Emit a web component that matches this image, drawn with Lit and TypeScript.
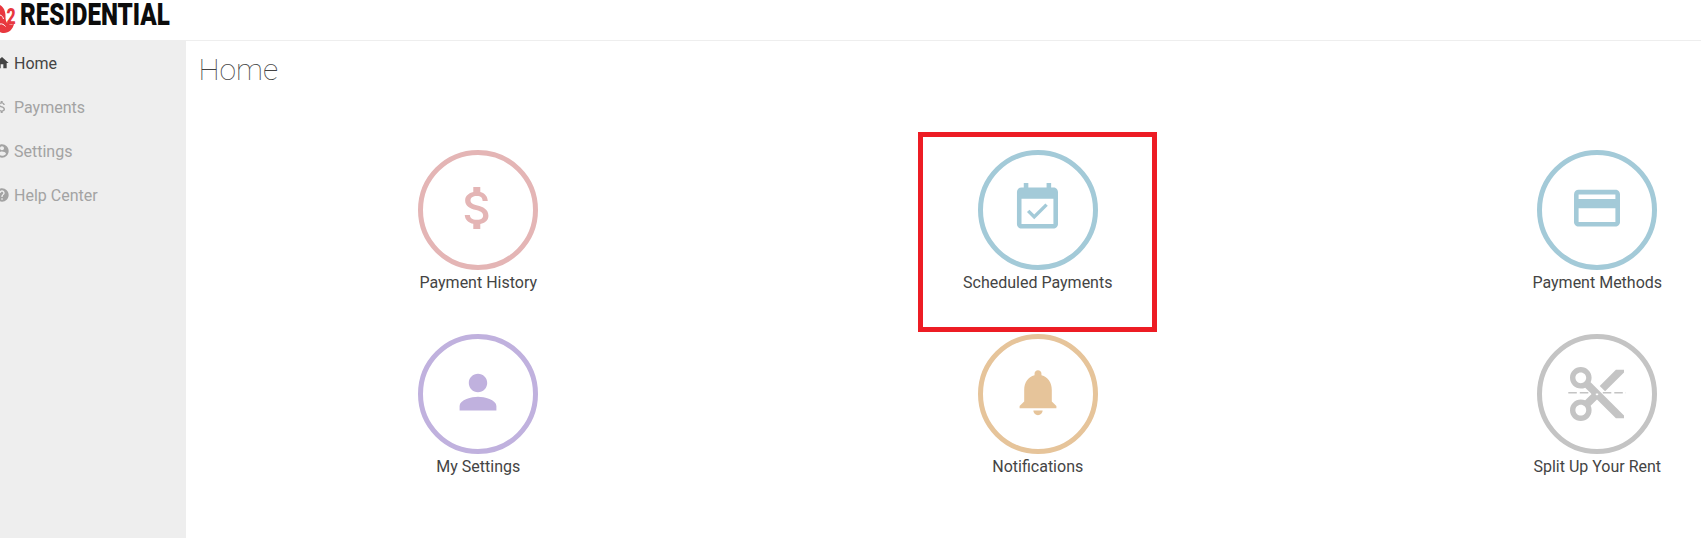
import { LitElement, html, css, svg } from "lit";
import { customElement } from "lit/decorators.js";

const ICONS: Record<string, ReturnType<typeof svg>> = {
  dollar: svg`<path transform="translate(27,25) scale(2.33)" d="M11.8 10.9c-2.27-.59-3-1.2-3-2.15 0-1.09 1.01-1.85 2.7-1.85 1.78 0 2.44.85 2.5 2.1h2.21c-.07-1.72-1.12-3.3-3.21-3.81V3h-3v2.16c-1.94.42-3.5 1.68-3.5 3.61 0 2.31 1.91 3.46 4.7 4.13 2.5.6 3 1.48 3 2.41 0 .69-.49 1.79-2.7 1.79-2.06 0-2.87-.92-2.98-2.1h-2.2c.12 2.19 1.76 3.42 3.68 3.83V21h3v-2.15c1.95-.37 3.5-1.5 3.5-3.55 0-2.84-2.43-3.81-4.7-4.4z"/>`,
  calendar: svg`<path transform="translate(27.1,25.6) scale(2.28)" d="M16.53 11.06L15.47 10l-4.88 4.88-2.12-2.12-1.06 1.06L10.59 17l5.94-5.94zM19 3h-1V1h-2v2H8V1H6v2H5c-1.11 0-1.99.9-1.99 2L3 19c0 1.1.89 2 2 2h14c1.1 0 2-.9 2-2V5c0-1.1-.9-2-2-2zm0 16H5V8h14v11z"/>`,
  card: svg`<path transform="translate(27.4,25.6) scale(2.3)" d="M20 4H4c-1.11 0-1.99.89-1.99 2L2 18c0 1.11.89 2 2 2h16c1.11 0 2-.89 2-2V6c0-1.11-.89-2-2-2zm0 14H4v-6h16v6zm0-10H4V6h16v2z"/>`,
  person: svg`<path transform="translate(27.4,25.6) scale(2.3)" d="M12 12c2.21 0 4-1.79 4-4s-1.79-4-4-4-4 1.79-4 4 1.79 4 4 4zm0 2c-2.67 0-8 1.34-8 4v2h16v-2c0-2.66-5.33-4-8-4z"/>`,
  bell: svg`<path transform="translate(27.4,25.6) scale(2.3)" d="M12 22c1.1 0 2-.9 2-2h-4c0 1.1.89 2 2 2zm6-6v-5c0-3.07-1.64-5.64-4.5-6.32V4c0-.83-.67-1.5-1.5-1.5s-1.5.67-1.5 1.5v.68C7.63 5.36 6 7.92 6 11v5l-2 2v1h16v-1l-2-2z"/>`,
  cut: svg`<path transform="translate(22.6,22.6) scale(2.7)" d="M9.64 7.64c.23-.5.36-1.05.36-1.64 0-2.21-1.79-4-4-4S2 3.79 2 6s1.79 4 4 4c.59 0 1.14-.13 1.64-.36L10 12l-2.36 2.36C7.14 14.13 6.59 14 6 14c-2.21 0-4 1.79-4 4s1.79 4 4 4 4-1.79 4-4c0-.59-.13-1.14-.36-1.64L12 14l7 7h3v-1L9.64 7.64zM6 8c-1.1 0-2-.89-2-2s.9-2 2-2 2 .89 2 2-.9 2-2 2zm0 12c-1.1 0-2-.89-2-2s.9-2 2-2 2 .89 2 2-.9 2-2 2zm6-7.5c-.28 0-.5-.22-.5-.5s.22-.5.5-.5.5.22.5.5-.22.5-.5.5zM19 3l-6 6 2 2 7-7V3z"/>
    <line x1="26.3" y1="53.8" x2="84" y2="53.8" stroke="currentColor" stroke-width="1.4" stroke-dasharray="8.5 3"/>`,
};

const NAV_ICONS: Record<string, ReturnType<typeof svg>> = {
  home: svg`<path d="M10 20v-6h4v6h5v-8h3L12 3 2 12h3v8z"/>`,
  dollar: svg`<path d="M11.8 10.9c-2.27-.59-3-1.2-3-2.15 0-1.09 1.01-1.85 2.7-1.85 1.78 0 2.44.85 2.5 2.1h2.21c-.07-1.72-1.12-3.3-3.21-3.81V3h-3v2.16c-1.94.42-3.5 1.68-3.5 3.61 0 2.31 1.91 3.46 4.7 4.13 2.5.6 3 1.48 3 2.41 0 .69-.49 1.79-2.7 1.79-2.06 0-2.87-.92-2.98-2.1h-2.2c.12 2.19 1.76 3.42 3.68 3.83V21h3v-2.15c1.95-.37 3.5-1.5 3.5-3.55 0-2.84-2.43-3.81-4.7-4.4z"/>`,
  account: svg`<path d="M12 2C6.48 2 2 6.48 2 12s4.48 10 10 10 10-4.48 10-10S17.52 2 12 2zm0 3c1.66 0 3 1.34 3 3s-1.34 3-3 3-3-1.34-3-3 1.34-3 3-3zm0 14.2c-2.5 0-4.71-1.28-6-3.22.03-1.99 4-3.08 6-3.08 1.99 0 5.97 1.09 6 3.08-1.29 1.94-3.5 3.22-6 3.22z"/>`,
  help: svg`<path d="M12 2C6.48 2 2 6.48 2 12s4.48 10 10 10 10-4.48 10-10S17.52 2 12 2zm1 17h-2v-2h2v2zm2.07-7.75l-.9.92C13.45 12.9 13 13.5 13 15h-2v-.5c0-1.1.45-2.1 1.17-2.83l1.24-1.26c.37-.36.59-.86.59-1.41 0-1.1-.9-2-2-2s-2 .9-2 2H8c0-2.21 1.79-4 4-4s4 1.79 4 4c0 .88-.36 1.68-.93 2.25z"/>`,
};

const NAV = [
  { label: "Home", icon: "home", active: true },
  { label: "Payments", icon: "dollar", active: false },
  { label: "Settings", icon: "account", active: false },
  { label: "Help Center", icon: "help", active: false },
];

const TILES = [
  { label: "Payment History", icon: "dollar", tone: "rose" },
  { label: "Scheduled Payments", icon: "calendar", tone: "blue" },
  { label: "Payment Methods", icon: "card", tone: "blue" },
  { label: "My Settings", icon: "person", tone: "violet" },
  { label: "Notifications", icon: "bell", tone: "sand" },
  { label: "Split Up Your Rent", icon: "cut", tone: "grey" },
];

@customElement("app-root")
export class AppRoot extends LitElement {
  static styles = css`
    :host {
      display: block;
      position: relative;
      width: 1701px;
      height: 538px;
      overflow: hidden;
      background: #fff;
      font-family: Roboto, "Liberation Sans", sans-serif;
      color: #444;
    }
    .header {
      height: 40px;
      border-bottom: 1px solid #eee;
      display: flex;
      align-items: flex-start;
    }
    .flame {
      width: 20px;
      height: 36px;
      flex: none;
      display: block;
    }
    .wordmark {
      display: block;
      font-weight: 900;
      font-size: 31px;
      line-height: 30px;
      color: #0c0c0c;
      white-space: nowrap;
      transform-origin: left center;
      transform: scaleX(0.78);
    }
    .body {
      display: flex;
      height: 497px;
    }
    .sidebar {
      width: 186px;
      flex: none;
      background: #eee;
      box-sizing: border-box;
    }
    .nav-item {
      height: 44px;
      display: flex;
      align-items: center;
      font-size: 16px;
      color: #a3a3a3;
    }
    .nav-item.active {
      color: #444;
    }
    .nav-icon {
      width: 16px;
      height: 16px;
      margin-left: -6px;
      margin-right: 4px;
      fill: currentColor;
      flex: none;
    }
    .main {
      flex: none;
      padding-left: 12.5px;
    }
    h1 {
      margin: 0;
      height: 109px;
      padding-top: 11px;
      box-sizing: border-box;
      font-weight: 100;
      font-size: 30px;
      line-height: 36px;
      color: #444;
    }
    .grid {
      display: grid;
      grid-template-columns: repeat(3, 559.5px);
      row-gap: 39px;
    }
    .tile {
      display: flex;
      flex-direction: column;
      align-items: center;
    }
    .ring {
      width: 120px;
      height: 120px;
      box-sizing: border-box;
      border: 5px solid currentColor;
      border-radius: 50%;
    }
    .ring svg {
      display: block;
      width: 110px;
      height: 110px;
      fill: currentColor;
    }
    .rose { color: #e4b5b5; }
    .blue { color: #a3cad8; }
    .violet { color: #c0b1de; }
    .sand { color: #e6c49a; }
    .grey { color: #c4c4c4; }
    .label {
      margin-top: 1px;
      font-size: 16px;
      line-height: 24px;
      color: #444;
      white-space: nowrap;
    }
    .mark-two {
      font-family: Roboto, sans-serif;
      font-weight: 900;
      font-size: 22px;
      fill: #e8383f;
    }
    .highlight {
      position: absolute;
      left: 918px;
      top: 132px;
      width: 239px;
      height: 200px;
      box-sizing: border-box;
      border: 5px solid #ed1c24;
      pointer-events: none;
    }
  `;

  render() {
    return html`
      <div class="header">
        <svg class="flame" viewBox="0 0 20 36" aria-hidden="true">
          <path fill="#e8383f" d="M0 5c2 1 4 3 5 7 1 3 0 6 1 9 1 3 4 4 8 3-1 5-5 9-10 9-2 0-3-.3-4-1z"/>
          <path fill="none" stroke="#fff" stroke-width="1" d="M0 15c2 .5 3 2 3.5 4M0 24c2-.5 4 .5 5.500 2.500"/>
          <text class="mark-two" transform="translate(6.500,24) scale(.72,1)">2</text>
        </svg>
        <span class="wordmark">RESIDENTIAL</span>
      </div>
      <div class="body">
        <nav class="sidebar">
          ${NAV.map(
            (n) => html`<div class="nav-item ${n.active ? "active" : ""}">
              <svg class="nav-icon" viewBox="0 0 24 24">${NAV_ICONS[n.icon]}</svg>
              <span>${n.label}</span>
            </div>`
          )}
        </nav>
        <main class="main">
          <h1>Home</h1>
          <div class="grid">
            ${TILES.map(
              (t) => html`<div class="tile">
                <div class="ring ${t.tone}">
                  <svg viewBox="0 0 110 110">${ICONS[t.icon]}</svg>
                </div>
                <div class="label">${t.label}</div>
              </div>`
            )}
          </div>
        </main>
      </div>
      <div class="highlight"></div>
    `;
  }
}
